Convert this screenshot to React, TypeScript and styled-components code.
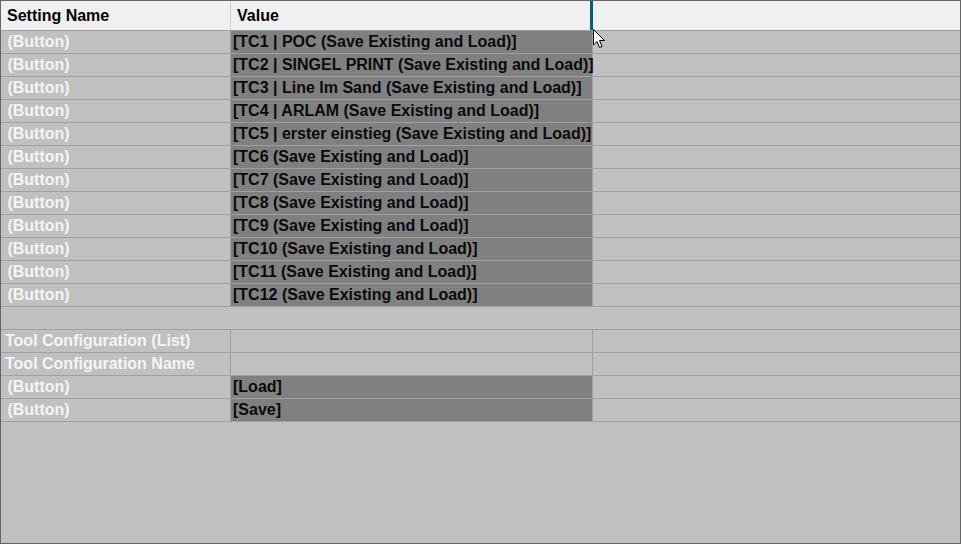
import React from 'react'
import styled, { createGlobalStyle } from 'styled-components'

const GlobalStyle = createGlobalStyle`
  html, body { margin: 0; padding: 0; background: #c0c0c0; }
  body { font-family: "Liberation Sans", Arial, sans-serif; }
`

const Grid = styled.div`
  width: 961px;
  height: 544px;
  box-sizing: border-box;
  border: 1px solid #646464;
  background: #c0c0c0;
  position: relative;
  overflow: hidden;
  font-size: 16px;
  font-weight: bold;
`

const HeaderRow = styled.div`
  display: flex;
  height: 29px;
  background: #f0f0f0;
  border-bottom: 1px solid #a0a0a0;
`

const HeaderCell = styled.div<{ $w?: number; $edge?: 'plain' | 'resize' | 'none' }>`
  display: flex;
  align-items: center;
  box-sizing: content-box;
  width: ${p => (p.$w ? `${p.$w}px` : 'auto')};
  flex: ${p => (p.$w ? '0 0 auto' : '1 1 auto')};
  padding-left: 6px;
  color: #000;
  border-right: ${p => (p.$edge === 'resize' ? '3px solid #0f5d6c' : p.$edge === 'plain' ? '1px solid #d0d0d0' : 'none')};
`

const Row = styled.div`
  display: flex;
  height: 22px;
  border-bottom: 1px solid #a0a0a0;
`

const NameCell = styled.div<{ $indent: number }>`
  display: flex;
  align-items: center;
  flex: 0 0 auto;
  width: 230px;
  padding-left: ${p => p.$indent}px;
  padding-bottom: 1px;
  box-sizing: border-box;
  border-right: 1px solid #a0a0a0;
  color: #f4f4f4;
  white-space: pre;
`

const ValueCell = styled.div<{ $dark: boolean }>`
  display: flex;
  align-items: center;
  flex: 0 0 auto;
  width: 362px;
  padding-left: 2px;
  padding-bottom: 1px;
  box-sizing: border-box;
  border-right: 1px solid #a0a0a0;
  background: ${p => (p.$dark ? '#808080' : 'transparent')};
  color: #0a0a0a;
  white-space: nowrap;
  overflow: visible;
`

const FillCell = styled.div`
  flex: 1;
`

const Cursor = styled.svg`
  position: absolute;
  left: 592px;
  top: 28px;
`

type Item = { name: string; value?: string; button?: boolean }

const items: (Item | null)[] = [
  { name: ' (Button)', value: '[TC1 | POC (Save Existing and Load)]', button: true },
  { name: ' (Button)', value: '[TC2 | SINGEL PRINT (Save Existing and Load)]', button: true },
  { name: ' (Button)', value: '[TC3 | Line Im Sand (Save Existing and Load)]', button: true },
  { name: ' (Button)', value: '[TC4 | ARLAM (Save Existing and Load)]', button: true },
  { name: ' (Button)', value: '[TC5 | erster einstieg (Save Existing and Load)]', button: true },
  { name: ' (Button)', value: '[TC6 (Save Existing and Load)]', button: true },
  { name: ' (Button)', value: '[TC7 (Save Existing and Load)]', button: true },
  { name: ' (Button)', value: '[TC8 (Save Existing and Load)]', button: true },
  { name: ' (Button)', value: '[TC9 (Save Existing and Load)]', button: true },
  { name: ' (Button)', value: '[TC10 (Save Existing and Load)]', button: true },
  { name: ' (Button)', value: '[TC11 (Save Existing and Load)]', button: true },
  { name: ' (Button)', value: '[TC12 (Save Existing and Load)]', button: true },
  null,
  { name: 'Tool Configuration (List)' },
  { name: 'Tool Configuration Name' },
  { name: ' (Button)', value: '[Load]', button: true },
  { name: ' (Button)', value: '[Save]', button: true },
]

export default function App() {
  return <>
    <GlobalStyle />
    <Grid>
      <HeaderRow>
        <HeaderCell $w={223} $edge="plain">Setting Name</HeaderCell>
        <HeaderCell $w={353} $edge="resize">Value</HeaderCell>
        <HeaderCell $edge="none" />
      </HeaderRow>
      {items.map((it, i) => it == null
        ? <Row key={i} />
        : <Row key={i}>
          <NameCell $indent={it.button ? 2 : 4}>{it.name}</NameCell>
          <ValueCell $dark={!!it.button}>{it.value}</ValueCell>
          <FillCell />
        </Row>)}
      <Cursor width="13" height="20" viewBox="0 0 13 20">
        <path d="M0.5 0.5 L0.5 16 L4 12.5 L6.5 18.5 L9 17.5 L6.5 11.5 L11.5 11.5 Z" fill="#fff" stroke="#000" strokeWidth="1" strokeLinejoin="miter" />
      </Cursor>
    </Grid>
  </>
}
